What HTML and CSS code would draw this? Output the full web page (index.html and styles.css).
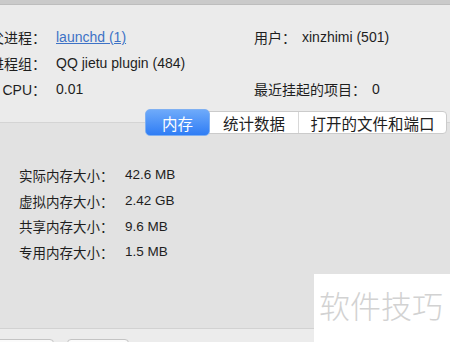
FILE: index.html
```
<!DOCTYPE html>
<html lang="zh-CN">
  <head>
    <meta charset="UTF-8" />
    <meta name="viewport" content="width=device-width, initial-scale=1.0" />
    <title>进程信息</title>
    <link rel="stylesheet" href="styles.css">
  </head>
  <body>
    <div id="window">
      <div class="titlebar"></div>

      <div class="info">
        <div class="col left">
          <div class="row">
            <span class="label">父进程：</span>
            <a class="value link" href="#">launchd (1)</a>
          </div>
          <div class="row">
            <span class="label">进程组：</span>
            <span class="value">QQ jietu plugin (484)</span>
          </div>
          <div class="row">
            <span class="label">% CPU：</span>
            <span class="value">0.01</span>
          </div>
        </div>
        <div class="col right">
          <div class="row">
            <span class="label">用户：</span>
            <span class="value">xinzhimi (501)</span>
          </div>
          <div class="row"></div>
          <div class="row">
            <span class="label">最近挂起的项目：</span>
            <span class="value">0</span>
          </div>
        </div>
      </div>

      <div class="panel">
        <div class="tabs">
          <div class="seg active">内存</div>
          <div class="seg">统计数据</div>
          <div class="seg">打开的文件和端口</div>
        </div>
        <div class="mem">
          <div class="mem-row"><span class="mem-label">实际内存大小：</span><span>42.6 MB</span></div>
          <div class="mem-row"><span class="mem-label">虚拟内存大小：</span><span>2.42 GB</span></div>
          <div class="mem-row"><span class="mem-label">共享内存大小：</span><span>9.6 MB</span></div>
          <div class="mem-row"><span class="mem-label">专用内存大小：</span><span>1.5 MB</span></div>
        </div>
      </div>

      <div class="footer">
        <div class="btn first"></div>
        <div class="btn second"></div>
      </div>

      <div class="watermark">软件技巧</div>
    </div>
  </body>
</html>
```
FILE: styles.css
```
html, body {
  margin: 0;
  padding: 0;
}

body {
  font-family: "Liberation Sans", "Noto Sans CJK SC", sans-serif;
  color: #1e1e1e;
  overflow: hidden;
}

#window {
  position: relative;
  width: 450px;
  height: 342px;
  overflow: hidden;
  background: #e2e2e2;
}

.titlebar {
  height: 4px;
  background: #cacaca;
  border-bottom: 1px solid #bdbdbd;
}

.info {
  display: flex;
  background: #ebebeb;
  border-bottom: 1px solid #d4d4d4;
  padding: 19px 0 20px;
  font-size: 14px;

  .col {
    display: flex;
    flex-direction: column;
  }
  .left {
    width: 254px;
    .label {
      width: 46px;
      display: flex;
      justify-content: flex-end;
    }
    .value {
      margin-left: 10px;
    }
  }
  .right {
    .value {
      margin-left: 6px;
    }
  }
  .row {
    height: 26px;
    display: flex;
    align-items: center;
    white-space: nowrap;
  }
  .link {
    color: #3d72c6;
    text-decoration: underline;
  }
}

.panel {
  display: flow-root;
  height: 205px;

  .tabs {
    display: flex;
    height: 23px;
    margin: -12px 0 0 145px;
    width: 302px;
    background: #fff;
    border: 1px solid #cbcbcb;
    border-radius: 4px;
    box-sizing: border-box;
    font-size: 15.5px;
  }
  .seg {
    display: flex;
    align-items: center;
    justify-content: center;
    border-left: 1px solid #d8d8d8;
  }
  .seg:nth-child(1) {
    width: 63px;
  }
  .seg:nth-child(2) {
    width: 88px;
  }
  .seg:nth-child(3) {
    flex: 1;
  }
  .seg.active {
    margin: -3px 0 -3px -1px;
    border: 1px solid #7fb0f2;
    border-radius: 5px;
    background: linear-gradient(#6eaafa, #2f7df5);
    color: #fff;
  }
  .seg.active + .seg {
    border-left: none;
  }
}

.mem {
  padding: 28px 0 0 19px;
  font-size: 13.5px;

  .mem-row {
    height: 25.7px;
    display: flex;
    align-items: center;
  }
  .mem-label {
    width: 106px;
  }
}

.footer {
  height: 20px;
  background: #ececec;
  border-top: 1px solid #d2d2d2;
  display: flex;
  padding-top: 10px;

  .btn {
    height: 20px;
    background: #fbfbfb;
    border: 1px solid #c4c4c4;
    border-radius: 4px;
    box-sizing: border-box;
  }
  .first {
    width: 64px;
    margin-left: -10px;
  }
  .second {
    width: 62px;
    margin-left: 13px;
  }
}

.watermark {
  position: absolute;
  right: 0;
  bottom: 0;
  width: 136px;
  height: 68px;
  background: #fff;
  color: #d2d2d2;
  font-family: "Noto Sans CJK SC", sans-serif;
  font-weight: 300;
  font-size: 31px;
  line-height: 62px;
  padding-left: 5px;
  box-sizing: border-box;
}
```
